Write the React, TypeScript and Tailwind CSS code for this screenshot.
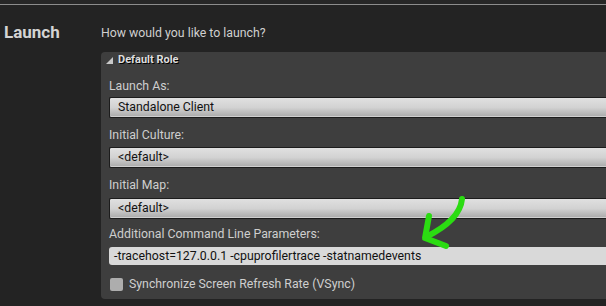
import React from 'react';

const font = { fontFamily: 'Roboto, "Noto Sans", sans-serif' };

function Dropdown({ value }: { value: string }) {
  return (
    <div className="h-[21px] border-y border-l border-[#1c1c1c] rounded-l-[2px] bg-gradient-to-b from-[#e0e0e0] via-[#d2d2d2] to-[#a9a9a9] pl-[8px] flex items-center text-[12.3px] text-[#111] shadow-[inset_0_-1px_0_#cfcfcf]">
      {value}
    </div>
  );
}

function Label({ children }: { children: React.ReactNode }) {
  return <div className="text-[12.3px] text-[#cfcfcf] leading-[14px]">{children}</div>;
}

export default function App() {
  return (
    <div className="relative w-[606px] h-[306px] overflow-hidden bg-[#232323]" style={font}>
      <div className="h-[4px] bg-[#262626]" />
      <div className="h-px bg-[#8c8c8c]" />
      <div className="flex">
        <div className="w-[101px] shrink-0 pl-[4px] pt-[17px] text-[17px] leading-[20px] font-bold text-[#d4d4d4]">Launch</div>
        <div className="flex-1 pt-[21px]">
          <div className="text-[12.3px] text-[#d0d0d0] leading-[14px]">How would you like to launch?</div>
          <div className="mt-[12px] bg-[#3e3e3e] rounded-l-[4px] pl-[8px] pb-[8px]">
            <div className="flex items-center gap-[5px] -ml-[3px] h-[16px] text-[11px] font-bold text-[#dedede] [text-shadow:1px_1px_0_#000]">
              <svg width="7" height="7" viewBox="0 0 7 7">
                <polygon points="7,0 7,7 0,7" fill="#c8c8c8" />
              </svg>
              Default Role
            </div>
            <div className="mt-[11px]"><Label>Launch As:</Label></div>
            <div className="mt-[4px]"><Dropdown value="Standalone Client" /></div>
            <div className="mt-[10px]"><Label>Initial Culture:</Label></div>
            <div className="mt-[5px]"><Dropdown value="<default>" /></div>
            <div className="mt-[10px]"><Label>Initial Map:</Label></div>
            <div className="mt-[6px]"><Dropdown value="<default>" /></div>
            <div className="mt-[8px]"><Label>Additional Command Line Parameters:</Label></div>
            <div className="mt-[6px] h-[18px] bg-[#d9d9d9] rounded-l-[3px] pl-[5px] flex items-center text-[12.3px] text-[#111]">
              -tracehost=127.0.0.1 -cpuprofilertrace -statnamedevents
            </div>
            <div className="mt-[12px] h-[14px] flex items-center gap-[6px]">
              <div className="ml-px w-[13px] h-[13px] rounded-[2px] bg-[#adadad]" />
              <span className="text-[12.3px] leading-[14px] text-[#cfcfcf]">Synchronize Screen Refresh Rate (VSync)</span>
            </div>
          </div>
        </div>
      </div>
      <svg className="absolute left-0 top-0" width="606" height="306" viewBox="0 0 606 306">
        <path d="M462 199 Q460 220 426 237" stroke="#2bdc12" strokeWidth="6" fill="none" strokeLinecap="round" />
        <path d="M429 216 L425 238 L446 246" stroke="#2bdc12" strokeWidth="6" fill="none" strokeLinecap="round" strokeLinejoin="round" />
      </svg>
    </div>
  );
}
